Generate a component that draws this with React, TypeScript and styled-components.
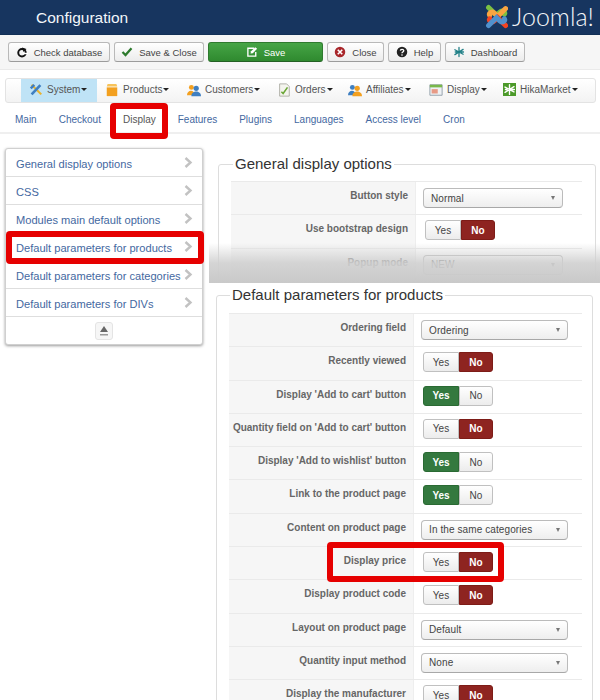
import styled, { createGlobalStyle } from 'styled-components';

const GlobalStyle = createGlobalStyle`
    html, body {
        margin: 0;
        padding: 0;
        background: #fff;
    }
    * {
        box-sizing: border-box;
    }
`;

const Page = styled.div`
    position: relative;
    width: 600px;
    height: 700px;
    overflow: hidden;
    display: flex;
    flex-direction: column;
    font-family: 'Liberation Sans', Arial, sans-serif;
    color: #555;
`;

/* header */
const Header = styled.header`
    flex: none;
    height: 35px;
    background: #17355f;
    border-bottom: 1px solid #123056;
    display: flex;
    align-items: center;
    justify-content: space-between;
    padding: 2px 6px 0 36px;
`;
const Title = styled.h1`
    margin: 0;
    font-size: 15.5px;
    font-weight: 400;
    color: #f2f5fa;
`;
const Logo = styled.div`
    display: flex;
    align-items: center;
    gap: 4px;
    margin-top: -3px;
    color: #f4f6f9;
    font-family: Lato, 'Open Sans', sans-serif;
    font-weight: 300;
    font-size: 25px;
    line-height: 1;
`;

/* toolbar */
const Toolbar = styled.div`
    flex: none;
    height: 35px;
    background: #f6f6f6;
    border-bottom: 1px solid #eaeaea;
    display: flex;
    align-items: center;
    gap: 4px;
    padding: 0 0 0 8px;
`;
const ToolButton = styled.button<{ $width: number; $primary?: boolean }>`
    width: ${(p) => p.$width}px;
    height: 20px;
    padding: 0;
    display: flex;
    align-items: center;
    justify-content: center;
    gap: 6px;
    border-radius: 3px;
    font: 9.5px 'Liberation Sans', Arial, sans-serif;
    color: ${(p) => (p.$primary ? '#fff' : '#444')};
    border: 1px solid ${(p) => (p.$primary ? '#2f7a2f' : '#b9b9b9')};
    border-bottom-color: ${(p) => (p.$primary ? '#246024' : '#9c9c9c')};
    background: ${(p) =>
        p.$primary ? 'linear-gradient(#46a546, #2f8a2f)' : 'linear-gradient(#fff, #ececec)'};
`;

/* main menu */
const MenuBar = styled.nav`
    flex: none;
    margin: 8px 4px 0 5px;
    height: 25px;
    padding-left: 15px;
    border: 1px solid #e3e3e3;
    border-radius: 3px;
    background: linear-gradient(#fff, #f3f3f3);
    display: flex;
    align-items: stretch;
`;
const MenuItem = styled.div<{ $width: number; $active?: boolean }>`
    width: ${(p) => p.$width}px;
    padding: 0 0 2px 8px;
    display: flex;
    align-items: center;
    gap: 4px;
    font-size: 10px;
    white-space: nowrap;
    color: #555;
    background: ${(p) => (p.$active ? '#bfe3f6' : 'transparent')};
`;
const Caret = styled.span`
    display: inline-block;
    margin-left: -3px;
    border-top: 3px solid #222;
    border-left: 3px solid transparent;
    border-right: 3px solid transparent;
`;

/* tabs */
const Tabs = styled.div`
    flex: none;
    height: 31px;
    border-bottom: 2px solid #efefef;
    padding: 3px 0 0 15px;
    display: flex;
    align-items: center;
    gap: 22px;
`;
const Tab = styled.a<{ $active?: boolean }>`
    font-size: 10px;
    color: ${(p) => (p.$active ? '#555' : '#44689f')};
`;

/* content */
const Content = styled.div`
    flex: 1;
    min-height: 0;
    margin-top: 14px;
    padding-left: 5px;
    display: flex;
    gap: 6px;
`;
const SidePanel = styled.ul`
    flex: none;
    width: 198px;
    height: 197px;
    margin: 0;
    padding: 0;
    list-style: none;
    border-radius: 3px;
    border: 1px solid #d0d0d0;
    box-shadow: 0 1px 3px rgba(0, 0, 0, 0.4);
    background: #fff;
`;
const SideRow = styled.li`
    height: 28px;
    padding: 2px 9px 0 10px;
    display: flex;
    align-items: center;
    justify-content: space-between;
    border-bottom: 1px solid #dedede;
    font-size: 11.1px;
    white-space: nowrap;
    color: #44689f;
`;
const SideFoot = styled.li`
    height: 27px;
    display: flex;
    align-items: center;
    justify-content: center;
`;
const CollapseButton = styled.span`
    width: 18px;
    height: 18px;
    border: 1px solid #e4e4e4;
    border-radius: 3px;
    background: #f6f6f6;
    display: flex;
    align-items: center;
    justify-content: center;
`;

const RightColumn = styled.div`
    flex: 1;
    min-width: 0;
    display: flex;
    flex-direction: column;
`;
const UpperBlock = styled.div`
    position: relative;
    flex: none;
    height: 135px;
    overflow: hidden;
`;
const Fade = styled.div`
    position: absolute;
    left: 0;
    right: 0;
    bottom: 0;
    height: 40px;
    background: linear-gradient(rgba(205, 205, 205, 0), rgba(208, 208, 208, 0.9) 50%, #c9c9c9);
`;
const Fieldset = styled.fieldset<{ $left: number; $right: number; $indent: number; $top: number; $pad: number }>`
    flex: none;
    margin: ${(p) => p.$top}px ${(p) => p.$right}px 0 ${(p) => p.$left}px;
    padding: ${(p) => p.$pad}px ${(p) => (p.$right > 5 ? 10 : 13)}px 0 ${(p) => p.$indent}px;
    min-width: 0;
    border: 1px solid #ddd;
    border-radius: 3px;
`;
const Legend = styled.legend<{ $left: number }>`
    margin-left: ${(p) => p.$left}px;
    padding: 0 2px;
    font-size: 15px;
    line-height: 18px;
    color: #333;
    white-space: nowrap;
`;
const Row = styled.div`
    display: grid;
    grid-template-columns: 185px 1fr;
    height: 33.3px;
    border-top: 1px solid #eaeaea;
`;
const Label = styled.div`
    background: #f6f6f6;
    border-right: 1px solid #eee;
    padding: 8px 7px 0 0;
    text-align: right;
    font-size: 10px;
    font-weight: 700;
    white-space: nowrap;
    color: #666;
`;
const Value = styled.div`
    padding: 5px 0 0 7px;
`;
const SelectBox = styled.div<{ $width: number }>`
    width: ${(p) => p.$width}px;
    height: 20px;
    margin-top: 1px;
    padding: 0 7px;
    display: flex;
    align-items: center;
    justify-content: space-between;
    border: 1px solid #bbb;
    border-bottom-color: #a8a8a8;
    border-radius: 4px;
    background: linear-gradient(#fff, #eee);
    font-size: 10px;
    letter-spacing: 0.1px;
    color: #444;
`;
const SelectCaret = styled.span`
    border-top: 4px solid #777;
    border-left: 2.5px solid transparent;
    border-right: 2.5px solid transparent;
`;
const Switch = styled.div`
    width: 70px;
    height: 20px;
    margin-left: 2px;
    display: grid;
    grid-template-columns: 36px 34px;
`;
const SwitchPart = styled.span<{ $on?: 'yes' | 'no'; $side: 'left' | 'right' }>`
    display: flex;
    align-items: center;
    justify-content: center;
    font-size: 10px;
    font-weight: ${(p) => (p.$on ? 700 : 400)};
    color: ${(p) => (p.$on ? '#fff' : '#444')};
    border: 1px solid
        ${(p) => (p.$on === 'yes' ? '#2a6a33' : p.$on === 'no' ? '#7d1c17' : '#c0c0c0')};
    border-radius: ${(p) => (p.$side === 'left' ? '3px 0 0 3px' : '0 3px 3px 0')};
    background: ${(p) =>
        p.$on === 'yes'
            ? '#34793f'
            : p.$on === 'no'
              ? '#8e2420'
              : 'linear-gradient(#fff, #ececec)'};
`;

/* red annotations drawn over the screenshot */
const Highlight = styled.div<{ $x: number; $y: number; $w: number; $h: number }>`
    position: absolute;
    left: ${(p) => p.$x}px;
    top: ${(p) => p.$y}px;
    width: ${(p) => p.$w}px;
    height: ${(p) => p.$h}px;
    border: 6px solid #e60000;
    border-radius: 4px;
`;

/* icons */
const Svg = ({ children, size = 12 }: { children: React.ReactNode; size?: number }) => (
    <svg width={size} height={size} viewBox="0 0 16 16" fill="none" style={{ flex: 'none' }}>
        {children}
    </svg>
);

const Splat = ({ color }: { color: string }) => (
    <g stroke={color} strokeWidth="1.7" strokeLinecap="round">
        <path d="M8 2v12M2.5 5l11 6M13.5 4.5l-11 7M3 8h2M11 8h3" />
    </g>
);

const JoomlaMark = () => (
    <svg width="23" height="25" viewBox="2 1 20 22" fill="none" strokeLinecap="round">
        <path d="M5 4l7 7 3-3c2-2 5 0 4 2" stroke="#7ac143" strokeWidth="4.400" />
        <path d="M20 5l-7 7-3-3C8 7 5 9 6 11" stroke="#f9a541" strokeWidth="4.400" />
        <path d="M20 20l-7-7-3 3c-2 2-5 0-4-2" stroke="#f44321" strokeWidth="4.400" />
        <path d="M5 20l7-7 3 3c2 2 5 0 4-2" stroke="#5091cd" strokeWidth="4.400" />
    </svg>
);

const DatabaseIcon = () => (
    <Svg>
        <circle cx="8" cy="9" r="5" stroke="#111" strokeWidth="2.6" />
        <path d="M8 2l6 2-4 4z" fill="#111" />
        <path d="M9 9h7v2H9z" fill="#fff" />
    </Svg>
);
const CheckIcon = () => (
    <Svg>
        <path d="M2 8l4 4 8-9" stroke="#2c7a2c" strokeWidth="3" />
    </Svg>
);
const SaveIcon = () => (
    <Svg>
        <path d="M11 3H2.5v10.500h10.500V8" stroke="#fff" strokeWidth="1.8" />
        <path d="M6 10l.7-3L12.500 1.500 14.800 3.800 9 9.500z" fill="#fff" />
    </Svg>
);
const CloseIcon = () => (
    <Svg>
        <circle cx="8" cy="8" r="7" fill="#a8262a" />
        <path d="M5 5l6 6M11 5l-6 6" stroke="#fff" strokeWidth="2.200" />
    </Svg>
);
const HelpIcon = () => (
    <Svg>
        <circle cx="8" cy="8" r="7" fill="#222" />
        <path d="M5.800 6.200C6 3.800 10.500 4 10.300 6.400 10.200 8 8 8 8 9.500" stroke="#fff" strokeWidth="1.800" />
        <circle cx="8" cy="12" r="1.100" fill="#fff" />
    </Svg>
);
const ToolsIcon = () => (
    <Svg size={14}>
        <path d="M3 2l11 11" stroke="#e9b22c" strokeWidth="2.400" />
        <path d="M13 2.500L3 13" stroke="#3f7fc1" strokeWidth="3" />
        <path d="M1 5l4-4 2 2-4 4z" fill="#3f7fc1" />
    </Svg>
);
const BoxIcon = () => (
    <Svg size={14}>
        <path d="M3 1h10l1 3H2z" fill="#f7c35a" />
        <path d="M2 5h12v10H2z" fill="#f3a01f" />
    </Svg>
);
const PeopleIcon = ({ front, back }: { front: string; back: string }) => (
    <Svg size={14}>
        <circle cx="5" cy="5" r="2.800" fill={back} />
        <path d="M0 14c0-7 9-7 9 0z" fill={back} />
        <circle cx="10.500" cy="6" r="3" fill={front} />
        <path d="M5 15c0-7 11-7 11 0z" fill={front} />
    </Svg>
);
const OrdersIcon = () => (
    <Svg size={14}>
        <path d="M3 1h8l3 3v11H3z" fill="#f4f4ee" stroke="#a9a9a0" />
        <path d="M5 10l2 2 5-7" stroke="#6aa636" strokeWidth="1.800" />
    </Svg>
);
const WindowIcon = () => (
    <Svg size={14}>
        <path d="M1 2h14v12H1z" fill="#eef1f4" stroke="#8d9aa6" />
        <path d="M1 2h14v3H1z" fill="#79b84a" />
        <path d="M3 7h7v5H3z" fill="#e79a86" />
    </Svg>
);
const HikaIcon = () => (
    <svg width="13" height="13" viewBox="0 0 16 16" style={{ flex: 'none' }}>
        <rect width="16" height="16" fill="#4c9a2a" />
        <Splat color="#fff" />
    </svg>
);
const Chevron = () => (
    <svg width="9" height="11" viewBox="0 0 9 11" fill="none" style={{ marginTop: -3 }}>
        <path d="M1.500 1l5 4.500-5 4.500" stroke="#c2c2c2" strokeWidth="2.400" />
    </svg>
);
const EjectIcon = () => (
    <svg width="10" height="10" viewBox="0 0 10 10">
        <path d="M5 0l4 6H1z" fill="#666" />
        <path d="M1 8h8v1.500H1z" fill="#999" />
    </svg>
);

type Setting =
    | { label: string; select: string; width: number }
    | { label: string; on: 'yes' | 'no' };

const productSettings: Setting[] = [
    { label: 'Ordering field', select: 'Ordering', width: 147 },
    { label: 'Recently viewed', on: 'no' },
    { label: "Display 'Add to cart' button", on: 'yes' },
    { label: "Quantity field on 'Add to cart' button", on: 'no' },
    { label: "Display 'Add to wishlist' button", on: 'yes' },
    { label: 'Link to the product page', on: 'yes' },
    { label: 'Content on product page', select: 'In the same categories', width: 147 },
    { label: 'Display price', on: 'no' },
    { label: 'Display product code', on: 'no' },
    { label: 'Layout on product page', select: 'Default', width: 147 },
    { label: 'Quantity input method', select: 'None', width: 147 },
    { label: 'Display the manufacturer', on: 'no' },
];

const generalSettings: Setting[] = [
    { label: 'Button style', select: 'Normal', width: 140 },
    { label: 'Use bootstrap design', on: 'no' },
    { label: 'Popup mode', select: 'NEW', width: 140 },
];

const SettingRow = ({ setting }: { setting: Setting }) => (
    <Row>
        <Label>{setting.label}</Label>
        <Value>
            {'select' in setting ? (
                <SelectBox $width={setting.width}>
                    {setting.select}
                    <SelectCaret />
                </SelectBox>
            ) : (
                <Switch>
                    <SwitchPart $side="left" $on={setting.on === 'yes' ? 'yes' : undefined}>
                        Yes
                    </SwitchPart>
                    <SwitchPart $side="right" $on={setting.on === 'no' ? 'no' : undefined}>
                        No
                    </SwitchPart>
                </Switch>
            )}
        </Value>
    </Row>
);

const sideItems = [
    'General display options',
    'CSS',
    'Modules main default options',
    'Default parameters for products',
    'Default parameters for categories',
    'Default parameters for DIVs',
];

const tabs = ['Main', 'Checkout', 'Display', 'Features', 'Plugins', 'Languages', 'Access level', 'Cron'];

export default function App() {
    return (
        <Page>
            <GlobalStyle />
            <Header>
                <Title>Configuration</Title>
                <Logo>
                    <JoomlaMark />
                    Joomla!
                </Logo>
            </Header>
            <Toolbar>
                <ToolButton $width={102}>
                    <DatabaseIcon />
                    Check database
                </ToolButton>
                <ToolButton $width={90}>
                    <CheckIcon />
                    Save &amp; Close
                </ToolButton>
                <ToolButton $width={115} $primary>
                    <SaveIcon />
                    Save
                </ToolButton>
                <ToolButton $width={57}>
                    <CloseIcon />
                    Close
                </ToolButton>
                <ToolButton $width={53}>
                    <HelpIcon />
                    Help
                </ToolButton>
                <ToolButton $width={80}>
                    <Svg>
                        <Splat color="#1f7f86" />
                    </Svg>
                    Dashboard
                </ToolButton>
            </Toolbar>
            <MenuBar>
                <MenuItem $width={76} $active>
                    <ToolsIcon />
                    System <Caret />
                </MenuItem>
                <MenuItem $width={82}>
                    <BoxIcon />
                    Products <Caret />
                </MenuItem>
                <MenuItem $width={90}>
                    <PeopleIcon front="#3f7fc1" back="#f3a01f" />
                    Customers <Caret />
                </MenuItem>
                <MenuItem $width={71}>
                    <OrdersIcon />
                    Orders <Caret />
                </MenuItem>
                <MenuItem $width={81}>
                    <PeopleIcon front="#f3a01f" back="#3f7fc1" />
                    Affiliates <Caret />
                </MenuItem>
                <MenuItem $width={74}>
                    <WindowIcon />
                    Display <Caret />
                </MenuItem>
                <MenuItem $width={95}>
                    <HikaIcon />
                    HikaMarket <Caret />
                </MenuItem>
            </MenuBar>
            <Tabs>
                {tabs.map((tab) => (
                    <Tab key={tab} $active={tab === 'Display'}>
                        {tab}
                    </Tab>
                ))}
            </Tabs>
            <Content>
                <SidePanel>
                    {sideItems.map((item) => (
                        <SideRow key={item}>
                            {item}
                            <Chevron />
                        </SideRow>
                    ))}
                    <SideFoot>
                        <CollapseButton>
                            <EjectIcon />
                        </CollapseButton>
                    </SideFoot>
                </SidePanel>
                <RightColumn>
                    <UpperBlock>
                        <Fieldset $top={7} $left={9} $right={4} $indent={12} $pad={8}>
                            <Legend $left={2}>General display options</Legend>
                            {generalSettings.map((s) => (
                                <SettingRow key={s.label} setting={s} />
                            ))}
                        </Fieldset>
                        <Fade />
                    </UpperBlock>
                    <Fieldset $top={3} $left={7} $right={7} $indent={12} $pad={9}>
                        <Legend $left={1}>Default parameters for products</Legend>
                        {productSettings.map((s) => (
                            <SettingRow key={s.label} setting={s} />
                        ))}
                    </Fieldset>
                </RightColumn>
            </Content>
            <Highlight $x={110} $y={103} $w={58} $h={36} />
            <Highlight $x={6} $y={231} $w={198} $h={33} />
            <Highlight $x={327} $y={542} $w={177} $h={40} />
        </Page>
    );
}
